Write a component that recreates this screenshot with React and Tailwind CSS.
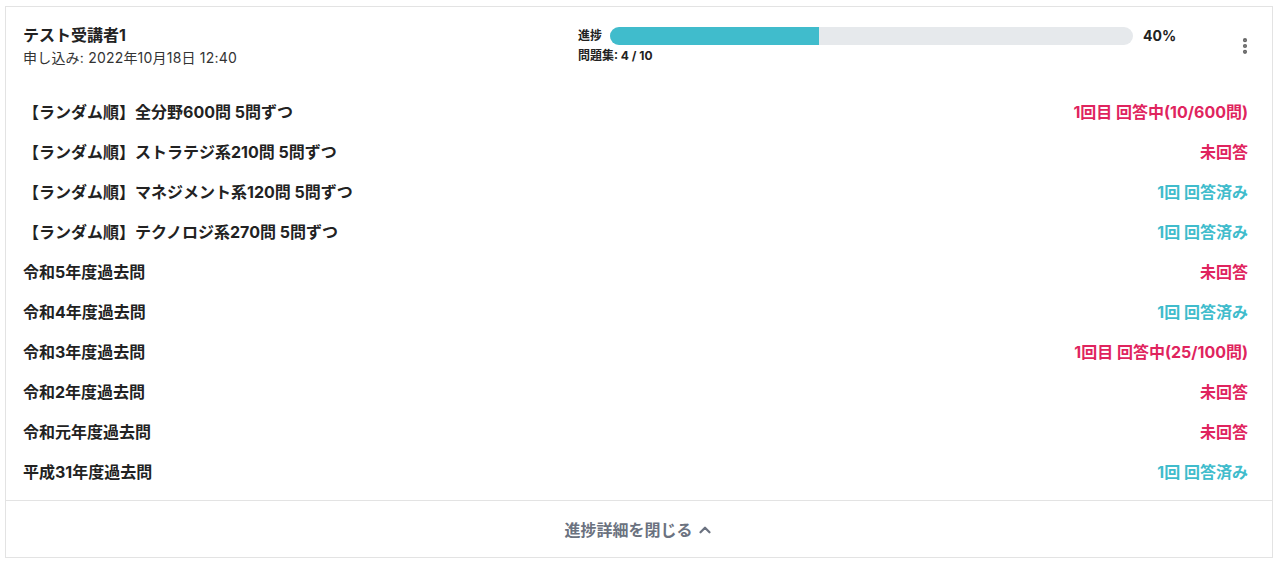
import { ChevronUp, EllipsisVertical } from "lucide-react";

const rows = [
  { title: "【ランダム順】全分野600問 5問ずつ", status: "1回目 回答中(10/600問)", tone: "red" },
  { title: "【ランダム順】ストラテジ系210問 5問ずつ", status: "未回答", tone: "red" },
  { title: "【ランダム順】マネジメント系120問 5問ずつ", status: "1回 回答済み", tone: "cyan" },
  { title: "【ランダム順】テクノロジ系270問 5問ずつ", status: "1回 回答済み", tone: "cyan" },
  { title: "令和5年度過去問", status: "未回答", tone: "red" },
  { title: "令和4年度過去問", status: "1回 回答済み", tone: "cyan" },
  { title: "令和3年度過去問", status: "1回目 回答中(25/100問)", tone: "red" },
  { title: "令和2年度過去問", status: "未回答", tone: "red" },
  { title: "令和元年度過去問", status: "未回答", tone: "red" },
  { title: "平成31年度過去問", status: "1回 回答済み", tone: "cyan" },
];

export default function App() {
  return (
    <div
      className="min-h-[563px] bg-white pl-[5px] pr-[6px] pt-[6px] text-[#222]"
      style={{ fontFamily: '"Inter", "Noto Sans CJK JP", sans-serif' }}
    >
      <div className="border border-[#e3e3e3] bg-white">
        {/* ヘッダー */}
        <div className="flex h-[85px] items-start pl-[17px] pr-[17px] pt-[17px]">
          <div className="w-[555px] shrink-0">
            <div className="text-[16px] font-bold leading-[22px]">テスト受講者1</div>
            <div className="mt-[2px] text-[14px] leading-[20px] tracking-[0.2px] text-[#333]">申し込み: 2022年10月18日 12:40</div>
          </div>
          <div className="w-[600px] shrink-0 pt-[3px]">
            <div className="flex items-center">
              <span className="w-[32px] text-[12px] font-bold leading-[14px]">進捗</span>
              <div className="h-[18px] w-[523px] overflow-hidden rounded-full bg-[#e6e9ec]">
                <div className="h-full w-[40%] bg-[#40bccc]" />
              </div>
              <span className="ml-[10px] text-[14px] font-bold leading-[18px]">40%</span>
            </div>
            <div className="mt-[4px] text-[12px] font-bold leading-[14px]">問題集: 4 / 10</div>
          </div>
          <div className="flex flex-1 justify-end pt-[12px]">
            <EllipsisVertical className="h-[20px] w-[20px] text-[#666]" strokeWidth={3} />
          </div>
        </div>

        {/* 問題集リスト */}
        <div className="pb-[8px]">
          {rows.map((r) => (
            <div key={r.title} className="flex h-[40px] items-center justify-between pl-[17px] pr-[24px]">
              <span className="text-[16px] font-bold">{r.title}</span>
              <span
                className={
                  r.tone === "red"
                    ? "text-[16px] font-bold text-[#e0245e]"
                    : "text-[16px] font-bold text-[#40bccc]"
                }
              >
                {r.status}
              </span>
            </div>
          ))}
        </div>

        {/* フッター */}
        <div className="flex h-[57px] items-center justify-center gap-[3px] border-t border-[#e3e3e3] pt-[2px] text-[16px] font-bold text-[#6b7280]">
          進捗詳細を閉じる
          <ChevronUp className="h-[18px] w-[18px]" strokeWidth={3} />
        </div>
      </div>
    </div>
  );
}
